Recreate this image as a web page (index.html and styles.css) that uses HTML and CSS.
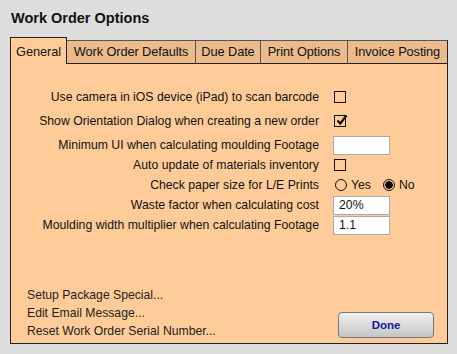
FILE: index.html
```html
<!DOCTYPE html>
<html lang="en">
<head>
    <meta charset="UTF-8" />
    <title>Work Order Options</title>
    <link rel="stylesheet" href="styles.css">
</head>
<body>
<div class="dialog">
    <h1 class="title">Work Order Options</h1>

    <nav class="tabs">
        <a class="tab active tab-general">General</a>
        <a class="tab tab-defaults">Work Order Defaults</a>
        <a class="tab tab-due">Due Date</a>
        <a class="tab tab-print">Print Options</a>
        <a class="tab last">Invoice Posting</a>
    </nav>

    <section class="panel">
        <div class="options">
            <div class="row roomy">
                <span class="label">Use camera in iOS device (iPad) to scan barcode</span>
                <span class="check"></span>
            </div>
            <div class="row roomy">
                <span class="label">Show Orientation Dialog when creating a new order</span>
                <span class="check">
                    <svg width="13" height="13" viewBox="0 0 13 13"><path d="M2.5 6.5 L5.2 9.6 L11.5 1.5" fill="none" stroke="#000" stroke-width="2.2"/></svg>
                </span>
            </div>
            <div class="row">
                <span class="label">Minimum UI when calculating moulding Footage</span>
                <input class="field" type="text" value="">
            </div>
            <div class="row">
                <span class="label">Auto update of materials inventory</span>
                <span class="check"></span>
            </div>
            <div class="row">
                <span class="label">Check paper size for L/E Prints</span>
                <span class="radios">
                    <span class="radio"></span><span class="radio-text">Yes</span>
                    <span class="radio on"></span><span class="radio-text">No</span>
                </span>
            </div>
            <div class="row">
                <span class="label">Waste factor when calculating cost</span>
                <input class="field" type="text" value="20%">
            </div>
            <div class="row">
                <span class="label">Moulding width multiplier when calculating Footage</span>
                <input class="field" type="text" value="1.1">
            </div>
        </div>

        <div class="footer">
            <div class="links">
                <a href="#">Setup Package Special...</a>
                <a href="#">Edit Email Message...</a>
                <a href="#">Reset Work Order Serial Number...</a>
            </div>
            <button class="done">Done</button>
        </div>
    </section>
</div>
</body>
</html>
```

FILE: styles.css
```css
body {
    margin: 0;
    padding: 0;
    background-color: #dddddd;
    font-family: 'Liberation Sans', Arial, sans-serif;
    color: #111;
    width: 457px;
    height: 354px;
    overflow: hidden;
}

.dialog {
    padding-left: 10px;
}

.title {
    margin: 0 0 10px 0;
    padding: 9px 0 0 1px;
    font-size: 14.5px;
    line-height: 18px;
    font-weight: bold;
    color: #111;
}

.tabs {
    display: flex;
    align-items: flex-end;
    width: 438px;
    height: 27px;
}

.tab {
    box-sizing: border-box;
    flex: none;
    height: 24px;
    padding: 0;
    line-height: 22px;
    font-size: 12.8px;
    letter-spacing: -0.1px;
    text-align: center;
    white-space: nowrap;
    overflow: hidden;
    background-color: #ebbb8c;
    border-top: 1px solid #555;
    border-right: 1px solid #555;
    border-bottom: 1px solid #222;
    color: #111;
}

.tab.active {
    height: 27px;
    padding-top: 3px;
    background-color: #ffcc99;
    border: 1px solid #222;
    border-bottom: none;
}

.tab-general { width: 57px; }
.tab-defaults { width: 129px; }
.tab-due { width: 65px; }
.tab-print { width: 87px; }

.tab.last {
    flex: 1;
    border-right-color: #222;
}

.panel {
    box-sizing: border-box;
    width: 438px;
    height: 280px;
    background-color: #ffcc99;
    border: 1px solid #222;
    border-top: none;
    display: flex;
    flex-direction: column;
}

.options {
    padding-top: 23px;
}

.row {
    display: flex;
    align-items: center;
    height: 20px;
    font-size: 12.25px;
}

.row.roomy {
    margin-bottom: 4px;
}

.label {
    width: 308px;
    margin-right: 14px;
    text-align: right;
    white-space: nowrap;
}

.check {
    box-sizing: border-box;
    width: 12px;
    height: 12px;
    margin-left: 1px;
    border: 1.5px solid #111;
    position: relative;
}

.check svg {
    position: absolute;
    left: -0.5px;
    top: -2.5px;
}

.field {
    box-sizing: border-box;
    width: 57px;
    height: 19px;
    margin: 0;
    padding: 0 5px;
    border: 1px solid #aaa;
    background: #fff;
    font-family: inherit;
    font-size: 12.25px;
    color: #111;
}

.radios {
    display: flex;
    align-items: center;
    margin-left: 2px;
}

.radio {
    box-sizing: border-box;
    width: 12px;
    height: 12px;
    border: 1px solid #111;
    border-radius: 50%;
    margin-right: 4px;
}

.radio.on {
    background: radial-gradient(circle, #000 0 3.5px, #fff0 4px);
    border-width: 1.5px;
}

.radio-text {
    margin-right: 12px;
}

.footer {
    margin-top: auto;
    display: flex;
    justify-content: space-between;
    align-items: flex-end;
    padding: 0 13px 3px 16px;
}

.links {
    display: flex;
    flex-direction: column;
}

.links a {
    font-size: 12.2px;
    line-height: 18px;
    color: #222;
    text-decoration: none;
}

.done {
    box-sizing: border-box;
    width: 96px;
    height: 26px;
    margin-bottom: 2px;
    border: 1px solid #777;
    border-radius: 4px;
    background: linear-gradient(#f0f0f0, #c4c4c4);
    font-family: inherit;
    font-size: 11.5px;
    font-weight: bold;
    color: #1515a0;
    cursor: pointer;
}
```
